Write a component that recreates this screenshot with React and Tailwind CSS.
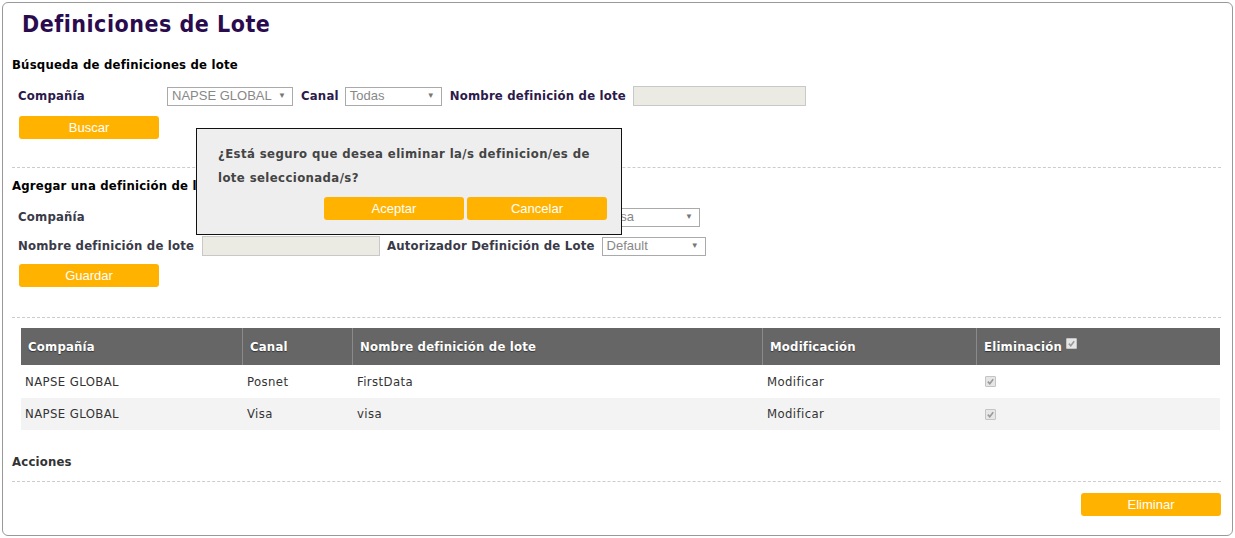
import React from "react";

const F = "font-['DejaVu_Sans_Condensed','DejaVu_Sans',sans-serif]";
const A = "font-['Liberation_Sans',Arial,sans-serif]";

function Btn({ children, w = "w-[140px]" }) {
  return (
    <div className={`${w} h-[23px] rounded-[3px] bg-[#ffb300] flex items-center justify-center text-white text-[13px] font-normal tracking-normal ${A}`}>
      {children}
    </div>
  );
}

function Select({ value, w }) {
  return (
    <div className={`${w} h-[19px] border border-[#aaa] bg-white flex items-center justify-between pl-[4px] pr-[6px] text-[13px] font-normal tracking-normal text-[#888] ${A}`}>
      <span>{value}</span>
      <span className="text-[8px] text-[#777]">▼</span>
    </div>
  );
}

function Input({ w }) {
  return <div className={`${w} h-[20px] border border-[#c8c8c8] bg-[#ebebe4]`} />;
}

function Check() {
  return (
    <span className="inline-flex w-[11px] h-[11px] border border-[#c4c4c4] bg-[#e6e6e6] rounded-[1px] items-center justify-center">
      <svg width="9" height="9" viewBox="0 0 10 10">
        <path d="M2 5.2 L4.2 7.4 L8 2.6" fill="none" stroke="#9a9a9a" strokeWidth="1.8" />
      </svg>
    </span>
  );
}

export default function App() {
  const rows = [
    ["NAPSE GLOBAL", "Posnet", "FirstData", "Modificar"],
    ["NAPSE GLOBAL", "Visa", "visa", "Modificar"],
  ];
  const cols = ["w-[222px]", "w-[110px]", "w-[410px]", "w-[214px]", "flex-1"];
  return (
    <div className="w-[1235px] h-[538px] bg-white relative">
      <div className={`absolute left-[2px] top-[2px] w-[1231px] h-[534px] border border-[#999] rounded-[6px] ${F}`}>
        <div className="pl-[9px] pr-[11px] flex flex-col">
          {/* title */}
          <div className="h-[43px] flex items-center pl-[10px] text-[23px] tracking-[0.5px] font-bold text-[#2a0c4e]">
            Definiciones de Lote
          </div>
          {/* search heading */}
          <div className="mt-[9px] h-[20px] flex items-center text-[13px] tracking-[0.2px] font-bold text-black">
            Búsqueda de definiciones de lote
          </div>
          {/* search row */}
          <div className="mt-[10px] h-[22px] flex items-center pl-[6px] text-[13px] tracking-[0.2px] font-bold text-[#2b1a4a]">
            <span className="w-[149px]">Compañía</span>
            <Select value="NAPSE GLOBAL" w="w-[126px]" />
            <span className="ml-[8px] mr-[6px]">Canal</span>
            <Select value="Todas" w="w-[97px]" />
            <span className="ml-[8px] mr-[7px]">Nombre definición de lote</span>
            <Input w="w-[173px]" />
          </div>
          <div className="mt-[9px] pl-[7px]">
            <Btn>Buscar</Btn>
          </div>
          <div className="mt-[28px] border-t border-dashed border-[#ccc]" />
          {/* add heading */}
          <div className="mt-[8px] h-[20px] flex items-center text-[13px] tracking-[0.2px] font-bold text-black">
            Agregar una definición de lote
          </div>
          <div className="mt-[10px] h-[22px] flex items-center pl-[6px] text-[13px] tracking-[0.2px] font-bold text-[#3a3a48]">
            <span className="w-[184px]">Compañía</span>
            <Select value="NAPSE GLOBAL" w="w-[127px]" />
            <span className="ml-[8px] w-[267px]">Canal</span>
            <Select value="Visa" w="w-[96px]" />
          </div>
          <div className="mt-[7px] h-[22px] flex items-center pl-[6px] text-[13px] tracking-[0.2px] font-bold text-[#3a3a48]">
            <span className="w-[184px]">Nombre definición de lote</span>
            <Input w="w-[178px]" />
            <span className="ml-[7px] mr-[7px]">Autorizador Definición de Lote</span>
            <Select value="Default" w="w-[104px]" />
          </div>
          <div className="mt-[7px] pl-[7px]">
            <Btn>Guardar</Btn>
          </div>
          <div className="mt-[30px] border-t border-dashed border-[#ccc]" />
          {/* table */}
          <div className="mt-[10px] ml-[9px] w-[1199px] flex flex-col text-[13px]">
            <div className="h-[37px] bg-[#666] flex text-white font-bold tracking-[0.2px]">
              {["Compañía", "Canal", "Nombre definición de lote", "Modificación"].map((h, i) => (
                <div key={h} className={`${cols[i]} border-r border-[#8a8a8a] flex items-center pl-[7px] [text-shadow:0_1px_1px_#333]`}>
                  {h}
                </div>
              ))}
              <div className="flex-1 flex items-center pl-[7px] gap-[4px] [text-shadow:0_1px_1px_#333]">
                Eliminación <span className="-mt-[6px] flex"><Check /></span>
              </div>
            </div>
            {rows.map((r, ri) => (
              <div key={ri} className={`${ri === 0 ? "h-[33px] bg-white" : "h-[32px] bg-[#f3f3f3]"} flex text-[#333] tracking-[0.4px]`}>
                {r.map((c, i) => (
                  <div key={i} className={`${cols[i]} flex items-center pl-[4px]`}>{c}</div>
                ))}
                <div className="flex-1 flex items-center pl-[8px]"><Check /></div>
              </div>
            ))}
          </div>
          <div className="mt-[22px] h-[20px] flex items-center text-[13px] tracking-[0.2px] font-bold text-[#333]">
            Acciones
          </div>
          <div className="mt-[9px] border-t border-dashed border-[#ccc]" />
          <div className="mt-[11px] flex justify-end">
            <Btn>Eliminar</Btn>
          </div>
        </div>
      </div>
      {/* dialog */}
      <div className={`absolute left-[196px] top-[128px] w-[426px] h-[107px] bg-[#eee] border border-[#111] ${F}`}>
        <div className="pt-[13px] pl-[21px] text-[13px] tracking-[0.4px] font-bold text-[#444] leading-[24px]">
          ¿Está seguro que desea eliminar la/s definicion/es de
          <br />
          lote seleccionada/s?
        </div>
        <div className="mt-[7px] flex justify-end gap-[3px] pr-[14px]">
          <Btn>Aceptar</Btn>
          <Btn>Cancelar</Btn>
        </div>
      </div>
    </div>
  );
}
